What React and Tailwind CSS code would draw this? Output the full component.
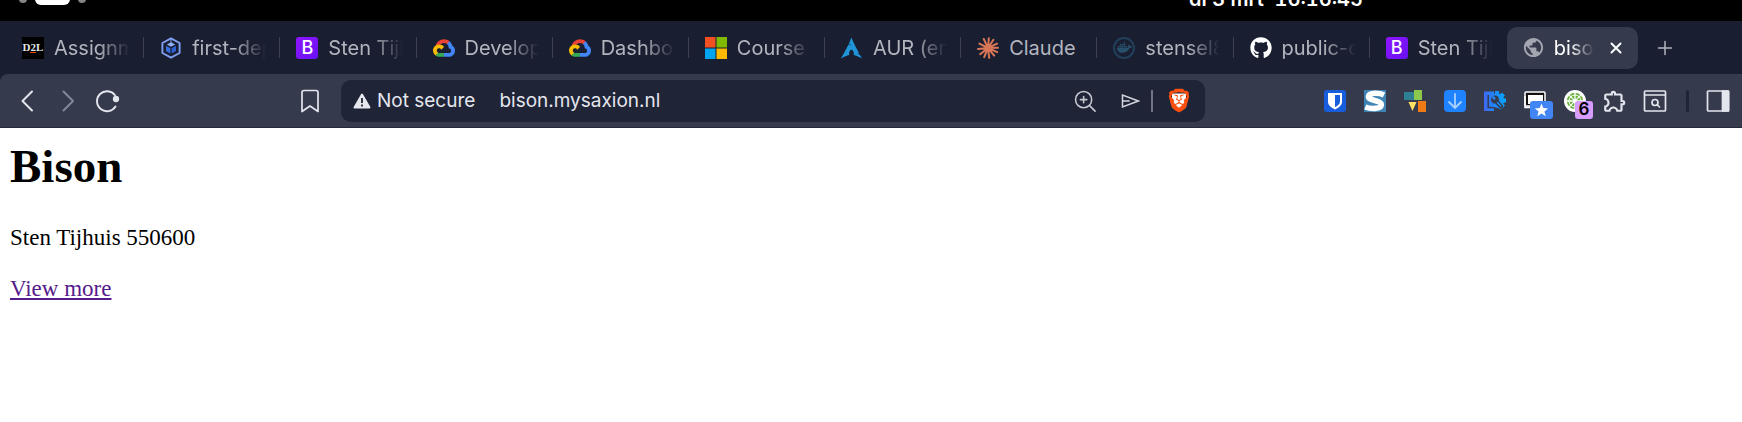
import React from 'react';
import { FaGithub, FaDocker } from 'react-icons/fa';
import { SiArchlinux, SiBrave } from 'react-icons/si';
import { MdOutlineExtension, MdPublic } from 'react-icons/md';

// --- Favicons ---
const D2LIcon = () => (
  <span className="flex size-[22px] flex-col items-center justify-center bg-black font-['Liberation_Serif',serif] text-[11px] leading-[11px] font-bold text-gray-200">
    D2L
    <span className="-mt-px h-px w-[6px] bg-orange-600" />
  </span>
);

const HexIcon = () => (
  <svg viewBox="0 0 22 22" className="size-[22px]" fill="none">
    <path d="M11 1.3 19.6 6v10L11 20.7 2.4 16V6z" stroke="#7f9ff0" strokeWidth="1.9" strokeLinejoin="round" />
    <path d="M11 5.2 15.2 7.5 11 9.8 6.8 7.5z" fill="#8fb0f8" />
    <path d="M6 8.8l4.4 2.4v5.2L6 14z" fill="#3a6fe0" />
    <path d="M16 8.8l-4.4 2.4v5.2L16 14z" fill="#2f5fd0" />
    <path d="M11 2v4" stroke="#7f9ff0" />
  </svg>
);

const BootstrapIcon = () => (
  <span className="flex size-[22px] items-center justify-center rounded-[3px] bg-linear-to-br from-[#9013fe] to-[#6610f2] text-[18px] leading-none font-medium text-white">
    B
  </span>
);

const GoogleCloudIcon = () => (
  <svg viewBox="0 -25 256 256" className="size-[22px]">
    <path fill="#ea4335" d="M170.252 56.819l22.253-22.253 1.483-9.37C153.437-11.677 88.976-7.496 52.42 33.92 42.267 45.423 34.734 59.764 30.717 74.573l7.97-1.123 44.505-7.34 3.436-3.513c19.797-21.742 53.27-24.667 76.128-6.168z" />
    <path fill="#4285f4" d="M224.205 73.918a100.249 100.249 0 0 0-30.217-48.722l-31.232 31.232a55.515 55.515 0 0 1 20.379 44.037v5.544c15.35 0 27.797 12.445 27.797 27.796 0 15.352-12.446 27.485-27.797 27.485h-55.671l-5.466 5.934v33.34l5.466 5.231h55.67c39.93.311 72.553-31.494 72.864-71.424a72.303 72.303 0 0 0-31.793-60.453" />
    <path fill="#34a853" d="M71.87 205.796h55.593V161.29H71.87a27.275 27.275 0 0 1-11.4-2.498l-7.887 2.42-22.409 22.253-1.952 7.574c12.567 9.489 27.9 14.825 43.647 14.757" />
    <path fill="#fbbc05" d="M71.87 61.425C31.94 61.664-.237 94.228.001 134.158a72.301 72.301 0 0 0 28.222 56.88l32.248-32.246c-13.99-6.322-20.208-22.786-13.887-36.776 6.32-13.99 22.786-20.208 36.775-13.888a27.796 27.796 0 0 1 13.887 13.888l32.248-32.248A72.224 72.224 0 0 0 71.87 61.425" />
  </svg>
);

const MicrosoftIcon = () => (
  <svg viewBox="0 0 22 22" className="size-[22px]">
    <path fill="#f25022" d="M0 0h10.5v10.5H0z" />
    <path fill="#7fba00" d="M11.5 0H22v10.5H11.5z" />
    <path fill="#00a4ef" d="M0 11.5h10.5V22H0z" />
    <path fill="#ffb900" d="M11.5 11.5H22V22H11.5z" />
  </svg>
);

const ClaudeIcon = () => (
  <svg viewBox="0 0 22 22" className="size-[22px]" stroke="#d97757" strokeWidth="2" strokeLinecap="round">
    <path d="M11 11 11.8 1.2M11 11 16.4 2.8M11 11 20 6.6M11 11 21 10.8M11 11 20.2 15.2M11 11 17.2 18.6M11 11 12.2 20.8M11 11 7.2 20.2M11 11 3.2 17.2M11 11 1 12M11 11 2.4 6.6M11 11 6.8 2" />
  </svg>
);

const DockerIcon = () => (
  <span className="flex size-[22px] items-center justify-center rounded-full border-2 border-[#22405a] text-[#28506b]">
    <FaDocker className="size-[15px]" />
  </span>
);

const tabs = [
  { title: 'Assignm', icon: <D2LIcon /> },
  { title: 'first-dep', icon: <HexIcon /> },
  { title: 'Sten Tijh', icon: <BootstrapIcon /> },
  { title: 'Develop', icon: <GoogleCloudIcon /> },
  { title: 'Dashboa', icon: <GoogleCloudIcon /> },
  { title: 'Course', icon: <MicrosoftIcon /> },
  { title: 'AUR (en', icon: <SiArchlinux className="size-[22px] text-[#1f95d8]" /> },
  { title: 'Claude', icon: <ClaudeIcon />, full: true },
  { title: 'stensel8', icon: <DockerIcon /> },
  { title: 'public-c', icon: <FaGithub className="size-[22px] text-white" /> },
  { title: 'Sten Tijh', icon: <BootstrapIcon /> },
];

// --- Toolbar icons ---
const Stroke = ({ children, className = 'size-[24px]', width = 1.7 }) => (
  <svg viewBox="0 0 24 24" className={className} fill="none" stroke="currentColor" strokeWidth={width} strokeLinecap="round" strokeLinejoin="round">
    {children}
  </svg>
);

const extensions = [
  {
    label: 'Bitwarden',
    icon: (
      <svg viewBox="0 0 22 22" className="size-[22px]">
        <rect width="22" height="22" rx="3" fill="#175ddc" />
        <path d="M4 3h14v8.5c0 4-3.4 6.3-7 8-3.6-1.7-7-4-7-8z" fill="#fff" />
        <path d="M11 5h5v6.5c0 2.6-2.2 4.2-5 5.7z" fill="#175ddc" />
      </svg>
    ),
  },
  {
    label: 'Stylus',
    icon: (
      <svg viewBox="0 0 22 22" className="size-[22px]">
        <rect width="22" height="22" fill="#3f83b5" />
        <path d="M20 5C16 3 5 2 4.500 6.600c-.4 4.400 13.400 3.400 12.800 8.400-.6 4.400-11 4-16 2" fill="none" stroke="#fff" strokeWidth="5.6" />
      </svg>
    ),
  },
  {
    label: 'Blocks',
    icon: (
      <svg viewBox="0 0 22 22" className="size-[22px]">
        <path d="M0 2h10v8H0z" fill="#2f7f93" />
        <path d="M10 0h8v10h-8z" fill="#8cc84b" />
        <path d="M4.500 12h8L8.500 21z" fill="#ffe066" />
        <path d="M14 11h8v11h-8z" fill="#f07a13" />
      </svg>
    ),
  },
  {
    label: 'Downloads',
    icon: (
      <svg viewBox="0 0 22 22" className="size-[22px]">
        <rect width="22" height="22" rx="4" fill="#1f82ff" />
        <path d="M11 4v13.500M5 12l6 6 6-6" fill="none" stroke="#a8d0ff" strokeWidth="1.8" strokeLinecap="round" strokeLinejoin="round" />
      </svg>
    ),
  },
  {
    label: 'Page tools',
    icon: (
      <svg viewBox="0 0 22 22" className="size-[22px]">
        <defs>
          <linearGradient id="gear" gradientUnits="userSpaceOnUse" x1="0" y1="0" x2="22" y2="0">
            <stop offset="0" stopColor="#3f68f5" />
            <stop offset="1" stopColor="#00a8ff" />
          </linearGradient>
        </defs>
        <path d="M0 1.500h10v19.500H0z" fill="url(#gear)" />
        <path d="M4.200 5v12.500H10" fill="none" stroke="#353a4d" strokeWidth="1.5" />
        <circle cx="13" cy="10.500" r="7.2" fill="url(#gear)" />
        <path d="M13 10.500V1M13 10.500 19.500 4M13 10.500h9M13 10.500l6.500 6.500" stroke="url(#gear)" strokeWidth="4" />
        <path d="M6 5.500v11h5l6 3 2-3-5-7z" fill="url(#gear)" />
        <circle cx="11" cy="9.500" r="3.9" fill="#353a4d" />
        <path d="m12.500 11.500 4.500 5" stroke="#353a4d" strokeWidth="4.2" strokeLinecap="round" />
        <path d="M8.500 6.500 11 9.300" stroke="url(#gear)" strokeWidth="2.4" />
        <path d="m13.500 12.500 3 3.300" stroke="url(#gear)" strokeWidth="1.4" strokeLinecap="round" />
      </svg>
    ),
  },
];

const WindowsIcon = () => (
  <svg viewBox="0 0 30 30" className="size-[30px]">
    <rect x="1" y="3" width="20" height="14" rx="1" fill="#111" stroke="#fff" strokeWidth="1.5" />
    <path d="M4 6h15v9H4z" fill="#fff" />
    <path d="M1 7v11.500h5" fill="none" stroke="#fff" strokeWidth="1.5" />
    <rect x="6" y="12" width="23" height="18" rx="3" fill="#4285f4" />
    <path d="m17.500 14.500 1.800 4.600 4.900.3-3.800 3.100 1.300 4.800-4.200-2.700-4.200 2.700 1.300-4.800-3.800-3.100 4.900-.3z" fill="#fff" />
  </svg>
);

const CitrusIcon = () => (
  <svg viewBox="0 0 22 22" className="size-[22px]">
    <circle cx="11" cy="11" r="11" fill="#fff" />
    <circle cx="11" cy="11" r="8.2" fill="#6cb33f" />
    <path d="M11 2v18M2 11h18M4.600 4.600l12.800 12.800M17.400 4.600 4.600 17.400" stroke="#fff" strokeWidth="1.3" />
    <circle cx="11" cy="11" r="6" fill="none" stroke="#fff" strokeWidth="1" />
    <circle cx="11" cy="11" r="1.8" fill="#fff" />
  </svg>
);

const IconButton = ({ label, children, className = '' }) => (
  <button type="button" aria-label={label} className={`flex h-[30px] w-[40px] items-center justify-center ${className}`}>
    {children}
  </button>
);

function SystemBar() {
  return (
    <div className="flex h-[21px] items-end justify-between overflow-hidden bg-black pr-[379px] pl-[19px] text-white">
      <div className="flex items-center gap-[8px] pb-[16px]">
        <span className="size-[8px] rounded-full bg-[#858585]" />
        <span className="h-[12px] w-[35px] rounded-full bg-white" />
        <span className="size-[8px] rounded-full bg-[#858585]" />
      </div>
      <time className="shrink-0 pb-[10px] text-[20px] leading-[24px] font-semibold whitespace-pre tabular-nums">di 3 mrt  16:16:45</time>
    </div>
  );
}

function TabStrip() {
  return (
    <div className="flex h-[53px] items-center bg-[#191e31] pl-[7px] text-[20px] leading-[26px] text-[#b3b5be]">
      <div role="tablist" className="grid min-w-0 flex-1 grid-cols-12">
        {tabs.map((tab, i) => (
          <div key={i} className="flex h-[42px] items-center">
            {i > 0 && <span className="h-[21px] w-px shrink-0 bg-[#3d4153]" />}
            <button
              type="button"
              role="tab"
              className={`flex min-w-0 flex-1 items-center gap-[10px] pr-[13px] ${i > 0 ? 'pl-[16px]' : 'pl-[15px]'}`}
            >
              <span className="shrink-0">{tab.icon}</span>
              <span
                className={`min-w-0 flex-1 overflow-hidden text-left whitespace-nowrap ${
                  tab.full ? '' : 'mask-[linear-gradient(to_right,black_calc(100%-32px),transparent)]'
                }`}
              >
                {tab.title}
              </span>
            </button>
          </div>
        ))}
        <div className="mr-[3px] ml-[2px] flex h-[42px] items-center rounded-[10px] bg-[#353a4d] pr-[10px] pl-[15px]">
          <button type="button" role="tab" aria-selected="true" className="flex min-w-0 flex-1 items-center gap-[9px] text-white">
            <MdPublic className="size-[23px] shrink-0 text-[#a3a6b0]" />
            <span className="min-w-0 flex-1 overflow-hidden text-left whitespace-nowrap mask-[linear-gradient(to_right,black_calc(100%-24px),transparent)]">
              bison
            </span>
          </button>
          <button type="button" aria-label="Close tab" className="ml-[10px] flex size-[24px] shrink-0 items-center justify-center text-white">
            <Stroke className="size-[24px]" width={2}><path d="m7.500 7.500 9 9M16.500 7.500l-9 9" /></Stroke>
          </button>
        </div>
      </div>
      <button type="button" aria-label="New tab" className="mr-[65px] ml-[12px] flex size-[24px] items-center justify-center">
        <Stroke width={1.5}><path d="M12 5.500v13M5.500 12h13" /></Stroke>
      </button>
    </div>
  );
}

function Toolbar() {
  return (
    <div className="bg-[#191e31]">
      <div className="flex h-[54px] items-center rounded-tl-[8px] border-b border-[#262837] bg-[#353a4d] text-[#e4e6ee]">
        <div className="flex w-[341px] shrink-0 items-center pl-[8px]">
          <IconButton label="Back"><Stroke width={2}><path d="M16 2.500 6.500 12l9.500 9.500" /></Stroke></IconButton>
          <IconButton label="Forward" className="text-[#83879a]"><Stroke width={2}><path d="M7.500 2.500 17 12l-9.500 9.500" /></Stroke></IconButton>
          <IconButton label="Reload">
            <Stroke width={1.9}>
              <path d="M19.500 17.500A10 10 0 1 1 19 6.200" />
              <circle cx="20" cy="10" r="2.2" fill="currentColor" />
            </Stroke>
          </IconButton>
          <IconButton label="Bookmark" className="mr-[11px] ml-auto">
            <Stroke width={1.7}><path d="M6 1.500h12a2 2 0 0 1 2 2v19l-8-5.500-8 5.500v-19a2 2 0 0 1 2-2z" /></Stroke>
          </IconButton>
        </div>
        <div className="flex h-[42px] min-w-0 flex-1 items-center rounded-[10px] bg-[#1f2436] pl-[12px] text-[19px] leading-[26px]">
          <svg viewBox="0 0 18 16" className="h-[16px] w-[18px] shrink-0">
            <path d="M9 1.500 16.500 14.500h-15z" fill="#e6e6ee" stroke="#e6e6ee" strokeWidth="2" strokeLinejoin="round" />
            <path d="M9 5v5M9 11.500v2" stroke="#1f2436" strokeWidth="1.8" />
          </svg>
          <span className="ml-[6px] shrink-0">Not secure</span>
          <input
            type="text"
            aria-label="Address"
            defaultValue="bison.mysaxion.nl"
            className="ml-[24px] min-w-0 flex-1 bg-transparent outline-none"
          />
          <IconButton label="Zoom" className="text-[#c6c8d2]">
            <Stroke className="size-[22px]">
              <circle cx="10.500" cy="10.500" r="8.8" />
              <path d="m17 17 6 6M10.500 7v7M7 10.500h7" />
            </Stroke>
          </IconButton>
          <IconButton label="Share" className="ml-[5px] text-[#d5d6de]">
            <Stroke className="size-[20px]" width={1.8}><path d="M3 5v14l19-7zM3 12h8" strokeLinejoin="miter" /></Stroke>
          </IconButton>
          <span className="ml-px h-[22px] w-[2px] bg-[#6f7383]" />
          <button type="button" aria-label="Brave Shields" className="mr-[15px] ml-[15px] flex h-[26px] w-[22px] items-center justify-center">
            <svg viewBox="0 0 22 24" className="h-[25px] w-[22px]">
              <path d="M4 5h14v9l-7 7-7-7z" fill="#fff" />
              <SiBrave x="-1" y="0" size="24" color="#fb5012" />
            </svg>
          </button>
        </div>
        <div className="flex w-[537px] shrink-0 items-center justify-end pr-[4px]">
          {extensions.map(ext => (
            <IconButton key={ext.label} label={ext.label}>{ext.icon}</IconButton>
          ))}
          <IconButton label="Tab windows" className="pt-[6px] pl-[7px]"><WindowsIcon /></IconButton>
          <button type="button" aria-label="Extension with 6 items" className="relative flex h-[30px] w-[40px] items-center justify-center">
            <CitrusIcon />
            <span className="absolute top-[15px] left-[20px] flex size-[18px] items-center justify-center rounded-[3px] bg-[#d69cff] text-[17px] leading-none font-semibold text-black">
              6
            </span>
          </button>
          <IconButton label="Extensions"><MdOutlineExtension className="size-[26px]" /></IconButton>
          <IconButton label="Search tabs">
            <Stroke className="size-[24px]">
              <rect x="1.500" y="2" width="21" height="20" rx="1" />
              <path d="M2 6h20M14.500 16l2 2" />
              <circle cx="12" cy="13.500" r="3" />
            </Stroke>
          </IconButton>
          <span className="mr-[9px] ml-[11px] h-[22px] w-[3px] rounded-full bg-[#1f2436]" />
          <IconButton label="Sidebar">
            <Stroke className="size-[24px]">
              <rect x="1.500" y="2" width="21" height="20" rx="1" />
              <path d="M16.500 2h6v20h-6z" fill="currentColor" />
            </Stroke>
          </IconButton>
        </div>
      </div>
    </div>
  );
}

function App() {
  return (
    <div className="min-h-screen bg-white font-['Inter',sans-serif]">
      <header>
        <SystemBar />
        <TabStrip />
        <Toolbar />
      </header>
      <main className="px-[10px] pt-[11px] font-['Liberation_Serif',serif] text-[23px] leading-[27px] text-black">
        <h1 className="text-[47px] leading-[54px] font-bold">Bison</h1>
        <p className="mt-[31px]">Sten Tijhuis 550600</p>
        <p className="mt-[24px]">
          <a href="#more" className="text-[#551a8b] underline">View more</a>
        </p>
      </main>
    </div>
  );
}

export default App;
